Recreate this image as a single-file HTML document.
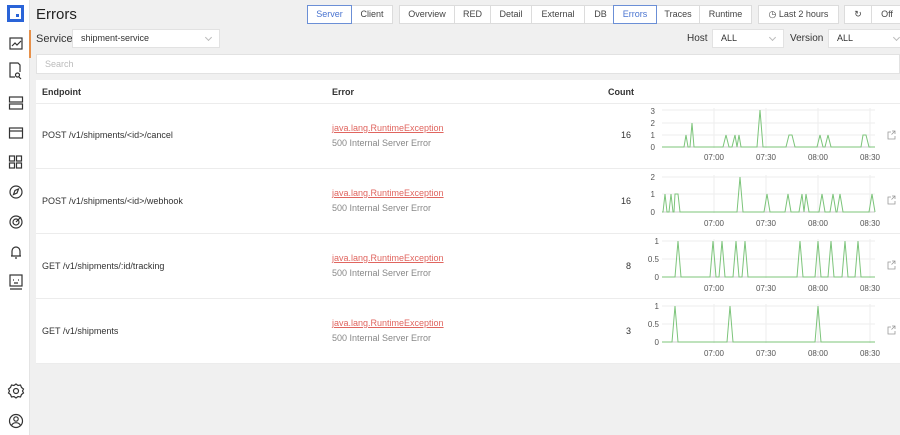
<!DOCTYPE html>
<html><head><meta charset="utf-8"><style>
*{box-sizing:border-box;margin:0;padding:0}
body{width:900px;height:435px;overflow:hidden;background:#f0f0f0;font-family:"Liberation Sans",sans-serif;font-size:9px;color:#333;position:relative}
.a{position:absolute}
.side{left:0;top:0;width:30px;height:435px;background:#fff;border-right:1px solid #e4e4e4}
.btn{position:absolute;top:5px;height:19px;background:#fff;border:1px solid #dcdcdc;font-size:9px;line-height:17px;text-align:center;color:#444}
.act{border-color:#6b8fd6;color:#4a74d0;z-index:2}
.sel{position:absolute;height:19px;background:#fff;border:1px solid #e2e2e2;font-size:9px;line-height:17px;padding-left:8px;color:#333}
.sel:after{content:"";position:absolute;right:8px;top:5px;width:4px;height:4px;border-right:1px solid #bbb;border-bottom:1px solid #bbb;transform:rotate(45deg)}
.tbl{left:36px;top:80px;width:864px;height:283px;background:#fff}
.hd{font-weight:bold;font-size:9px;color:#333}
.line{position:absolute;left:36px;width:864px;height:1px;background:#ececec}
.ep{font-size:9px;color:#333}
.err{color:#e0655f;text-decoration:underline;font-size:9px}
.sub{color:#888;font-size:9px}
svg text{font-family:"Liberation Sans",sans-serif;font-size:8px;fill:#555}
</style></head><body>
<div class="a side"></div>
<svg class="a" style="left:0;top:0" width="30" height="435" fill="none" stroke="#333" stroke-width="1.2">
<rect x="7" y="5" width="17" height="17" fill="#2a64d8" stroke="none"/>
<rect x="10" y="8" width="11" height="11" fill="#fff" stroke="none"/>
<rect x="16" y="14" width="3" height="3" fill="#2a64d8" stroke="none"/>
<rect x="10" y="38" width="12" height="11"/><path d="M12 46l3-3 2 2 4-4"/>
<path d="M20 72v-7l-2-2h-8v14h5"/><circle cx="17.5" cy="75" r="2"/><path d="M19 77l2 2"/>
<rect x="9.5" y="97" width="13" height="5"/><rect x="9.5" y="104" width="13" height="5"/>
<rect x="9.5" y="128" width="13" height="10"/><path d="M9.5 131h13"/>
<rect x="9.5" y="156" width="5" height="5"/><rect x="16.5" y="156" width="5" height="5"/><rect x="9.5" y="163" width="5" height="5"/><rect x="16.5" y="163" width="5" height="5"/>
<circle cx="16" cy="192" r="6"/><path d="M13.5 194.5l1.5-4 3.5-1.5-1.5 4z"/>
<circle cx="16" cy="222" r="6"/><circle cx="16" cy="222" r="3"/><path d="M16 222l5-5"/>
<path d="M12 256v-5a4 4 0 0 1 8 0v5h1h-10M15 258h2"/>
<rect x="10" y="275" width="12" height="11"/><path d="M13 280h1M18 280h1M14 283h4M10 289h12"/>
<circle cx="16" cy="391" r="2.5"/><path d="M16 384l2 1.5 2.5-.5 1 2.5 2 1.5-1 2 1 2-2 1.5-1 2.5-2.5-.5-2 1.5-2-1.5-2.5.5-1-2.5-2-1.5 1-2-1-2 2-1.5 1-2.5 2.5.5z"/>
<circle cx="16" cy="421" r="6.5"/><circle cx="16" cy="419" r="2.2"/><path d="M11.5 425.5a5 5 0 0 1 9 0"/>
</svg>
<div class="a" style="left:36px;top:6px;font-size:15px;color:#222">Errors</div>
<div class="a" style="left:29px;top:30px;width:2px;height:28px;background:#e6904a"></div>
<div class="a" style="left:36px;top:33px;font-size:11px;color:#333">Service</div>
<div class="sel" style="left:72px;top:29px;width:148px">shipment-service</div>
<div class="a" style="left:687px;top:33px;font-size:10px;color:#333">Host</div>
<div class="sel" style="left:712px;top:29px;width:72px">ALL</div>
<div class="a" style="left:790px;top:33px;font-size:10px;color:#333">Version</div>
<div class="sel" style="left:828px;top:29px;width:80px">ALL</div>
<div class="btn act" style="left:307px;width:45px">Server</div>
<div class="btn" style="left:351px;width:42px">Client</div>
<div class="btn" style="left:399px;width:56px">Overview</div>
<div class="btn" style="left:454px;width:37px">RED</div>
<div class="btn" style="left:490px;width:42px">Detail</div>
<div class="btn" style="left:531px;width:54px">External</div>
<div class="btn" style="left:584px;width:33px">DB</div>
<div class="btn act" style="left:613px;width:44px">Errors</div>
<div class="btn" style="left:656px;width:44px">Traces</div>
<div class="btn" style="left:699px;width:53px">Runtime</div>
<div class="btn" style="left:758px;width:81px">&#9719; Last 2 hours</div>
<div class="btn" style="left:844px;width:28px">&#8635;</div>
<div class="btn" style="left:871px;width:32px">Off</div>
<div class="a" style="left:36px;top:54px;width:864px;height:20px;background:#fff;border:1px solid #e2e2e2;padding:4px 8px;color:#bbb;font-size:9px">Search</div>
<div class="a tbl"></div>
<div class="a hd" style="left:42px;top:87px">Endpoint</div>
<div class="a hd" style="left:332px;top:87px">Error</div>
<div class="a hd" style="left:608px;top:87px">Count</div>
<div class="line" style="top:103px"></div><div class="line" style="top:168px"></div><div class="line" style="top:233px"></div><div class="line" style="top:298px"></div><div class="line" style="top:363px"></div>
<div class="a ep" style="left:42px;top:130px">POST /v1/shipments/&lt;id&gt;/cancel</div>
<div class="a ep" style="left:42px;top:196px">POST /v1/shipments/&lt;id&gt;/webhook</div>
<div class="a ep" style="left:42px;top:261px">GET /v1/shipments/:id/tracking</div>
<div class="a ep" style="left:42px;top:326px">GET /v1/shipments</div>
<div class="a err" style="left:332px;top:123px">java.lang.RuntimeException</div><div class="a sub" style="left:332px;top:138px">500 Internal Server Error</div>
<div class="a err" style="left:332px;top:188px">java.lang.RuntimeException</div><div class="a sub" style="left:332px;top:203px">500 Internal Server Error</div>
<div class="a err" style="left:332px;top:253px">java.lang.RuntimeException</div><div class="a sub" style="left:332px;top:268px">500 Internal Server Error</div>
<div class="a err" style="left:332px;top:318px">java.lang.RuntimeException</div><div class="a sub" style="left:332px;top:333px">500 Internal Server Error</div>
<div class="a" style="left:621px;top:130px">16</div>
<div class="a" style="left:621px;top:196px">16</div>
<div class="a" style="left:626px;top:261px">8</div>
<div class="a" style="left:626px;top:326px">3</div>
<svg class="a" style="left:0;top:0" width="900" height="435">
<g stroke="#eee" stroke-width="1">
<path d="M662 110h213M662 123h213M662 135h213M662 147h213M662 177h213M662 194h213M662 212h213M662 241h213M662 259h213M662 277h213M662 306h213M662 324h213M662 342h213"/>
<path d="M714 108v40M766 108v40M818 108v40M870 108v40M714 175v38M766 175v38M818 175v38M870 175v38M714 239v39M766 239v39M818 239v39M870 239v39M714 304v39M766 304v39M818 304v39M870 304v39"/>
</g>
<g stroke="#ccc"><path d="M662 147h213M662 212h213M662 277h213M662 342h213"/></g>
<g fill="none" stroke="#7cc47a" stroke-width="1">
<polyline points="662,147 684,147 686,135 688,147 690,147 692,123 694,147 723,147 726,135 729,147 732,147 735,135 737,147 739,135 741,147 757,147 760,110 763,147 786,147 789,135 792,135 795,147 817,147 820,135 823,147 825,147 828,135 831,147 861,147 863,135 866,135 869,147 875,147"/>
<polyline points="662,212 663,212 665,194 667,212 669,212 671,194 673,212 674,212 675,194 678,194 680,212 737,212 740,177 743,212 764,212 767,194 770,212 785,212 788,194 791,212 799,212 802,194 804,212 806,194 809,212 819,212 822,194 825,212 830,212 833,194 836,212 837,212 840,194 843,212 869,212 872,194 875,212"/>
<polyline points="662,277 675,277 678,241 681,277 710,277 713,241 716,277 719,277 722,241 725,277 733,277 736,241 739,277 742,277 745,241 748,277 797,277 800,241 803,277 815,277 818,241 821,277 828,277 831,241 834,277 842,277 845,241 848,277 855,277 858,241 861,277 875,277"/>
<polyline points="662,342 672,342 675,306 678,342 727,342 730,306 733,342 815,342 818,306 821,342 875,342"/>
</g>
<g text-anchor="end"><text x="655" y="114">3</text><text x="655" y="126">2</text><text x="655" y="138">1</text><text x="655" y="150">0</text>
<text x="655" y="180">2</text><text x="655" y="197">1</text><text x="655" y="215">0</text>
<text x="659" y="244">1</text><text x="659" y="262">0.5</text><text x="659" y="280">0</text>
<text x="659" y="309">1</text><text x="659" y="327">0.5</text><text x="659" y="345">0</text></g>
<g text-anchor="middle">
<text x="714" y="160">07:00</text><text x="766" y="160">07:30</text><text x="818" y="160">08:00</text><text x="870" y="160">08:30</text>
<text x="714" y="226">07:00</text><text x="766" y="226">07:30</text><text x="818" y="226">08:00</text><text x="870" y="226">08:30</text>
<text x="714" y="291">07:00</text><text x="766" y="291">07:30</text><text x="818" y="291">08:00</text><text x="870" y="291">08:30</text>
<text x="714" y="356">07:00</text><text x="766" y="356">07:30</text><text x="818" y="356">08:00</text><text x="870" y="356">08:30</text></g>
<g fill="none" stroke="#999" stroke-width="0.8">
<path d="M891 132h-3v7h7v-3M892 131h3v3M895 131l-3.5 3.5"/>
<path d="M891 197h-3v7h7v-3M892 196h3v3M895 196l-3.5 3.5"/>
<path d="M891 262h-3v7h7v-3M892 261h3v3M895 261l-3.5 3.5"/>
<path d="M891 327h-3v7h7v-3M892 326h3v3M895 326l-3.5 3.5"/>
</g>
</svg>
</body></html>
